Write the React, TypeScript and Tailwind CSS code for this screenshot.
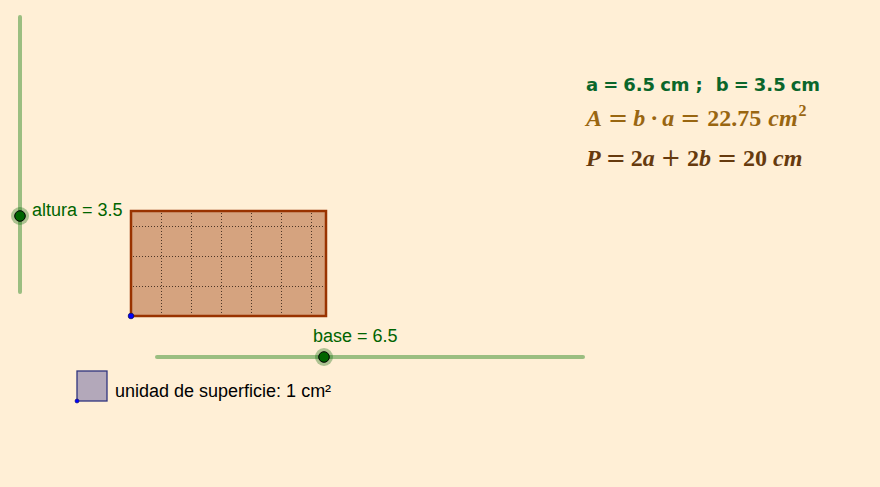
import React from "react";

export default function App() {
  const vx = [161, 191, 221, 251, 281, 311];
  const hy = [226, 256, 286];
  return (
    <div className="relative w-[880px] h-[487px] overflow-hidden bg-[#FFEFD6]">
      <svg className="absolute left-0 top-0" width={880} height={487}>
        {/* vertical slider */}
        <line x1={20} y1={17} x2={20} y2={292} stroke="#9BBE81" strokeWidth={4} strokeLinecap="round" />
        {/* horizontal slider */}
        <line x1={157} y1={357} x2={583} y2={357} stroke="#9BBE81" strokeWidth={4} strokeLinecap="round" />
        {/* rectangle */}
        <rect x={131} y={211} width={195} height={105} fill="#D5A37F" />
        {vx.map((x) => (
          <line key={"v" + x} x1={x + 0.5} y1={213} x2={x + 0.5} y2={315} stroke="#4E3626" strokeWidth={1} strokeDasharray="1 2" />
        ))}
        {hy.map((y) => (
          <line key={"h" + y} x1={133} y1={y + 0.5} x2={325} y2={y + 0.5} stroke="#4E3626" strokeWidth={1} strokeDasharray="1 2" />
        ))}
        <rect x={131} y={211} width={195} height={105} fill="none" stroke="#993300" strokeWidth={2.5} />
        <circle cx={131} cy={316} r={2.8} fill="#0000FF" stroke="#101060" strokeWidth={0.8} />
        {/* unit square */}
        <rect x={77} y={371} width={30} height={30} fill="#B3A8BA" stroke="#30347E" strokeWidth={1.3} />
        <circle cx={77} cy={401} r={2} fill="#0000FF" stroke="#101060" strokeWidth={0.6} />
        {/* slider points */}
        <circle cx={20} cy={216} r={9} fill="#006400" fillOpacity={0.32} />
        <circle cx={20} cy={216} r={5.3} fill="#006400" stroke="#000" strokeWidth={1} />
        <circle cx={324} cy={357} r={9} fill="#006400" fillOpacity={0.32} />
        <circle cx={324} cy={357} r={5.3} fill="#006400" stroke="#000" strokeWidth={1} />
      </svg>

      <div className="absolute left-[32px] top-[201px] text-[18px] leading-none text-[#006400] whitespace-nowrap [font-family:'Liberation_Sans',Arial,sans-serif]">
        altura = 3.5
      </div>
      <div className="absolute left-[313px] top-[327px] text-[18px] leading-none text-[#006400] whitespace-nowrap [font-family:'Liberation_Sans',Arial,sans-serif]">
        base = 6.5
      </div>
      <div className="absolute left-[115px] top-[382px] text-[18px] leading-none text-black whitespace-nowrap [font-family:'Liberation_Sans',Arial,sans-serif]">
        unidad de superficie: 1 cm²
      </div>

      {/* formulas */}
      <div className="absolute left-[586px] top-[76px] flex items-baseline text-[18px] leading-none font-bold text-[#0A662B] whitespace-nowrap [font-family:'DejaVu_Sans',sans-serif]">
        <span>a</span>
        <span className="ml-[5px]">=</span>
        <span className="ml-[5px]">6.5</span>
        <span className="ml-[5px]">cm</span>
        <span className="ml-[6px]">;</span>
        <span className="ml-[13px]">b</span>
        <span className="ml-[5px]">=</span>
        <span className="ml-[5px]">3.5</span>
        <span className="ml-[5px]">cm</span>
      </div>

      <div className="absolute left-[586px] top-[106px] flex items-baseline text-[24px] leading-none font-bold text-[#996611] whitespace-nowrap [font-family:'Liberation_Serif','Times_New_Roman',serif]">
        <span className="italic">A</span>
        <span className="ml-[6px] [font-family:'DejaVu_Sans',sans-serif] font-normal">=</span>
        <span className="ml-[5px] italic">b</span>
        <span className="ml-[5px]">·</span>
        <span className="ml-[4px] italic">a</span>
        <span className="ml-[6px] [font-family:'DejaVu_Sans',sans-serif] font-normal">=</span>
        <span className="ml-[7px]">22.75</span>
        <span className="ml-[7px] italic">cm</span>
        <span className="text-[16px] relative -top-[10px] ml-[1px]">2</span>
      </div>

      <div className="absolute left-[586px] top-[146px] flex items-baseline text-[24px] leading-none font-bold text-[#663A0E] whitespace-nowrap [font-family:'Liberation_Serif','Times_New_Roman',serif]">
        <span className="italic">P</span>
        <span className="ml-[5px] [font-family:'DejaVu_Sans',sans-serif] font-normal">=</span>
        <span className="ml-[5px]">2</span>
        <span className="italic">a</span>
        <span className="ml-[6px] [font-family:'DejaVu_Sans',sans-serif] font-normal">+</span>
        <span className="ml-[6px]">2</span>
        <span className="italic">b</span>
        <span className="ml-[6px] [font-family:'DejaVu_Sans',sans-serif] font-normal">=</span>
        <span className="ml-[6px]">20</span>
        <span className="ml-[6px] italic">cm</span>
      </div>
    </div>
  );
}
